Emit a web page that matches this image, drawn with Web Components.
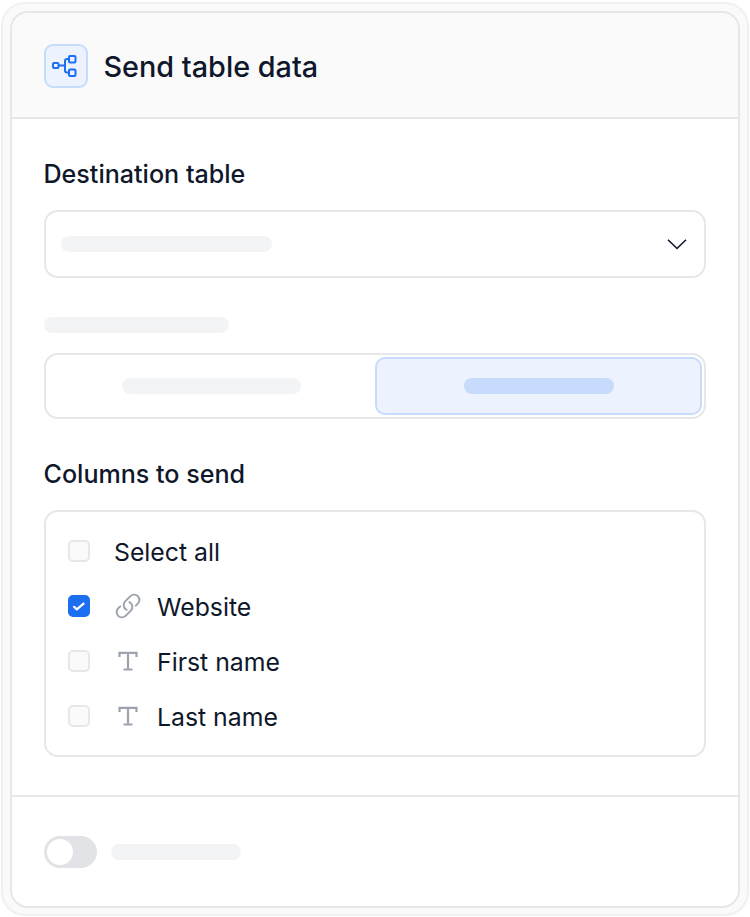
<!DOCTYPE html>
<html>
<head>
<meta charset="utf-8">
<style>
html, body { margin: 0; background: #fff; }
body { font-family: Inter, "Liberation Sans", sans-serif; color: #0f172a; }
</style>
</head>
<body>
<send-table-card></send-table-card>

<template id="card-tpl">
<style>
:host { display: block; width: 750px; height: 917px; box-sizing: border-box; padding: 2px 1px 1px; }
.frame { box-sizing: border-box; height: 100%; background: #fafafa; border: 2px solid #eff0f2; border-radius: 24px; padding: 7px 7px 6px; }
.inner { box-sizing: border-box; height: 100%; background: #fff; border: 2px solid #e5e7eb; border-radius: 18px; overflow: hidden; display: flex; flex-direction: column; }
header { height: 106px; flex: none; box-sizing: border-box; background: #fafafa; border-bottom: 2px solid #e5e7eb; display: flex; align-items: center; gap: 15.500px; padding: 2px 0 0 32px; }
.icon-box { width: 44px; height: 44px; box-sizing: border-box; border: 2px solid #c7dcfd; border-radius: 9px; background: #edf3fe; display: flex; align-items: center; justify-content: center; }
h1 { margin: 0; font-size: 28.800px; font-weight: 450; }
main { flex: 1; box-sizing: border-box; padding: 38px 32px 0; display: flex; flex-direction: column; }
.label { font-size: 25.100px; font-weight: 450; line-height: 34px; margin-left: -0.500px; }
.select { margin-top: 19px; height: 68px; box-sizing: border-box; border: 2px solid #e5e7eb; border-radius: 14px; display: flex; align-items: center; justify-content: space-between; padding: 0 16px 0 15px; }
.gap-label { margin-top: 39px; }
.seg { margin-top: 20px; height: 66px; box-sizing: border-box; border: 2px solid #e5e7eb; border-radius: 14px; padding: 2px; display: grid; grid-template-columns: 1fr 1fr; }
.seg div { display: flex; align-items: center; justify-content: center; border-radius: 10px; border: 2px solid transparent; }
.seg .on { background: #edf3fe; border-color: #c7dcfd; }
.cols-label { margin-top: 38px; }
.list { margin-top: 19px; height: 247px; box-sizing: border-box; border: 2px solid #e5e7eb; border-radius: 14px; padding: 12px 22px; display: flex; flex-direction: column; }
footer { height: 111px; flex: none; box-sizing: border-box; border-top: 2px solid #e5e7eb; display: flex; align-items: center; gap: 14px; padding: 0 32px; }
.toggle { width: 53px; height: 32px; border-radius: 16px; background: #e1e3e7; display: flex; align-items: center; padding-left: 3px; box-sizing: border-box; }
.toggle i { width: 26px; height: 26px; border-radius: 50%; background: #fff; display: block; }
</style>
<div class="frame"><div class="inner">
  <header>
    <div class="icon-box">
      <svg width="26" height="26" viewBox="0 0 26 26" fill="none" stroke="#1d6ff2" stroke-width="2" style="margin-left:-2px">
        <rect x="1" y="10" width="5.500" height="5" rx="1"/>
        <rect x="17" y="3" width="6.500" height="6.500" rx="1"/>
        <rect x="17" y="16.500" width="6.500" height="6.500" rx="1"/>
        <path d="M6.500 12.500H13M17 6H15a2 2 0 0 0-2 2V17.500a2 2 0 0 0 2 2h2"/>
      </svg>
    </div>
    <h1>Send table data</h1>
  </header>
  <main>
    <div class="label">Destination table</div>
    <div class="select">
      <skeleton-bar width="211" height="16"></skeleton-bar>
      <svg width="22" height="22" viewBox="0 0 22 22" fill="none" stroke="#0f172a" stroke-width="1.600"><path d="M2 6.700 11 15.500 20 6.700"/></svg>
    </div>
    <skeleton-bar class="gap-label" width="185" height="16"></skeleton-bar>
    <div class="seg">
      <div><skeleton-bar width="179" height="16"></skeleton-bar></div>
      <div class="on"><skeleton-bar width="150" height="16" color="#c7dcfd"></skeleton-bar></div>
    </div>
    <div class="label cols-label">Columns to send</div>
    <div class="list">
      <column-row>Select all</column-row>
      <column-row checked icon="link">Website</column-row>
      <column-row icon="text">First name</column-row>
      <column-row icon="text">Last name</column-row>
    </div>
  </main>
  <footer>
    <div class="toggle"><i></i></div>
    <skeleton-bar width="130" height="16"></skeleton-bar>
  </footer>
</div></div>
</template>

<template id="row-tpl">
<style>
:host { display: flex; align-items: center; height: 55px; flex: none; font-size: 24.800px; color: #0f172a; }
.box { width: 22px; height: 22px; box-sizing: border-box; border: 2px solid #e5e7eb; border-radius: 5px; background: #fafafa; flex: none; margin: -1px 24px 0 0; display: flex; align-items: center; justify-content: center; }
:host([checked]) .box { background: #1d6ff2; border-color: #1d6ff2; }
#ico { display: flex; flex: none; }
#ico:not(:empty) { margin-right: 15px; }
</style>
<span class="box"></span><span id="ico"></span><slot></slot>
</template>

<script>
class SkeletonBar extends HTMLElement {
    constructor(){
        super();
        this.attachShadow({ mode: "open" });
    }
    connectedCallback(){
        const w = this.getAttribute("width");
        const h = this.getAttribute("height");
        const c = this.getAttribute("color") || "#f3f4f6";
        this.shadowRoot.innerHTML = `<style>:host{display:block;flex:none;width:${w}px;height:${h}px;border-radius:8px;background:${c};}</style>`;
    }
}

const ICONS = {
    link: `<svg width="28" height="28" viewBox="0 0 24 24" fill="none" stroke="#9ca3af" stroke-width="1.700" stroke-linecap="round" stroke-linejoin="round" style="transform:translateY(-1px)"><path d="M13.190 8.688a4.500 4.500 0 0 1 1.242 7.244l-4.500 4.500a4.500 4.500 0 0 1-6.364-6.364l1.757-1.757m13.350-.622 1.757-1.757a4.500 4.500 0 0 0-6.364-6.364l-4.500 4.500a4.500 4.500 0 0 0 1.242 7.244"/></svg>`,
    text: `<svg width="28" height="28" viewBox="0 0 28 28" fill="none" stroke="#9ca3af" stroke-width="2.200"><path d="M5.500 9V4.800H22.500V9M14 4.800V21.500M9.500 21.500H18.500"/></svg>`
};
const CHECK = `<svg width="14" height="14" viewBox="0 0 14 14" fill="none" stroke="#fff" stroke-width="2.200" stroke-linecap="round" stroke-linejoin="round"><path d="M2 7.800 4.800 10.400 11.600 4.600"/></svg>`;

class ColumnRow extends HTMLElement {
    constructor(){
        super();
        this.attachShadow({ mode: "open" });
        this.shadowRoot.appendChild(document.getElementById("row-tpl").content.cloneNode(true));
    }
    connectedCallback(){
        const icon = this.getAttribute("icon");
        if(icon != null){
            this.shadowRoot.getElementById("ico").innerHTML = ICONS[icon];
        }
        if(this.hasAttribute("checked")){
            this.shadowRoot.querySelector(".box").innerHTML = CHECK;
        }
    }
}

class SendTableCard extends HTMLElement {
    constructor(){
        super();
        this.attachShadow({ mode: "open" });
        this.shadowRoot.appendChild(document.getElementById("card-tpl").content.cloneNode(true));
    }
}

customElements.define("skeleton-bar", SkeletonBar);
customElements.define("column-row", ColumnRow);
customElements.define("send-table-card", SendTableCard);
</script>
</body>
</html>
